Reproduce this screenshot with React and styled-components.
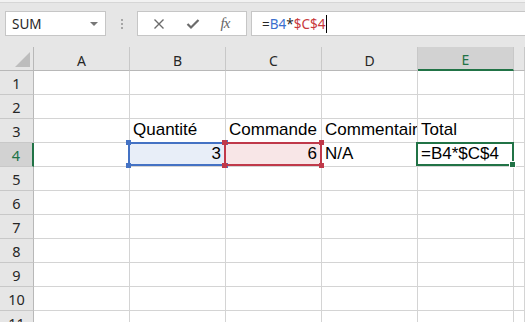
import styled, { createGlobalStyle, css } from "styled-components";

const GlobalStyle = createGlobalStyle`
  body {
    margin: 0;
    background: #ffffff;
    overflow: hidden;
  }
`;

const GREEN = "#217346";

const Sheet = styled.div`
  width: 525px;
  height: 322px;
  overflow: hidden;
  font-family: "Noto Sans", "Liberation Sans", sans-serif;
`;

const TopBar = styled.div`
  height: 47px;
  box-sizing: border-box;
  background: #e6e6e6;
  border-top: 2px solid #f2f2f2;
  box-shadow: inset 0 1px 0 #d6d6d6;
  display: flex;
  align-items: flex-start;
  padding: 9px 0 0 5px;
`;

const NameBox = styled.div`
  width: 101px;
  height: 25px;
  box-sizing: border-box;
  background: #fff;
  border: 1px solid #c6c6c6;
  display: flex;
  align-items: center;
  justify-content: space-between;
  padding: 0 6px 0 6px;
  font-size: 13.5px;
  color: #262626;
`;

const Caret = styled.span`
  width: 0;
  height: 0;
  border-left: 4px solid transparent;
  border-right: 4px solid transparent;
  border-top: 4px solid #777;
  margin-right: 1px;
`;

const Grip = styled.div`
  width: 31px;
  height: 25px;
  display: flex;
  flex-direction: column;
  align-items: center;
  justify-content: center;
  gap: 2px;

  span {
    width: 2px;
    height: 2px;
    background: #a6a6a6;
  }
`;

const FxButtons = styled.div`
  width: 110px;
  height: 25px;
  box-sizing: border-box;
  background: #fff;
  border: 1px solid #c6c6c6;
  display: flex;
  align-items: center;
  justify-content: space-around;
  padding: 0 6px 0 4px;
  color: #6b6b6b;
`;

const FxLabel = styled.span`
  font-family: "Liberation Serif", serif;
  font-style: italic;
  font-size: 15px;
  color: #666;
  letter-spacing: -1px;
`;

const FormulaInput = styled.div`
  flex: 1;
  height: 25px;
  margin-left: 4px;
  box-sizing: border-box;
  background: #fff;
  border: 1px solid #c6c6c6;
  border-right: none;
  display: flex;
  align-items: center;
  padding-left: 10px;
  font-size: 13.5px;
  color: #262626;
`;

const Ref = styled.span`
  color: ${(p) => p.$color};
`;

const TextCursor = styled.span`
  width: 1px;
  height: 18px;
  background: #000;
  margin-left: 1px;
`;

const Grid = styled.div`
  display: grid;
  grid-template-columns: 34px repeat(5, 96px) 1fr;
  grid-template-rows: 24px;
  grid-auto-rows: 24px;
`;

const Corner = styled.div`
  background: #e6e6e6;
  border-right: 1px solid #b8b8b8;
  border-bottom: 1px solid #b8b8b8;
  box-sizing: border-box;
  position: relative;

  &::after {
    content: "";
    position: absolute;
    right: 3px;
    bottom: 3px;
    width: 0;
    height: 0;
    border-left: 15px solid transparent;
    border-bottom: 15px solid #bdbdbd;
  }
`;

const ColHead = styled.div`
  box-sizing: border-box;
  background: ${(p) => (p.$active ? "#d2d2d2" : "#e6e6e6")};
  border-right: 1px solid #c8c8c8;
  border-bottom: ${(p) => (p.$active ? `2px solid ${GREEN}` : "1px solid #b8b8b8")};
  color: ${(p) => (p.$active ? GREEN : "#262626")};
  font-size: 14px;
  display: flex;
  align-items: center;
  justify-content: center;
  padding-top: 3px;
`;

const RowHead = styled.div`
  box-sizing: border-box;
  background: ${(p) => (p.$active ? "#d2d2d2" : "#e6e6e6")};
  border-right: ${(p) => (p.$active ? `2px solid ${GREEN}` : "1px solid #b8b8b8")};
  border-bottom: 1px solid #c8c8c8;
  color: ${(p) => (p.$active ? GREEN : "#262626")};
  font-size: 14.5px;
  display: flex;
  align-items: center;
  justify-content: center;
  padding-top: 1px;
`;

const Cell = styled.div`
  position: relative;
  box-sizing: border-box;
  border-right: 1px solid #d4d4d4;
  border-bottom: 1px solid #d4d4d4;
  background: ${(p) => p.$fill || "#fff"};
  font-family: "Liberation Sans", Arial, sans-serif;
  font-size: 17px;
  color: #000;
  white-space: nowrap;
  overflow: ${(p) => (p.$sel ? "visible" : "hidden")};
  display: flex;
  align-items: flex-end;
  justify-content: ${(p) => (p.$right ? "flex-end" : "flex-start")};
  padding: 0 4px 3px 3px;
`;

const Selection = styled.div`
  position: absolute;
  top: -1px;
  left: -2px;
  right: -1px;
  bottom: 0;
  border: 2px solid ${(p) => p.$color};
  pointer-events: none;
  z-index: ${(p) => p.$z || 1};
`;

const Handle = styled.span`
  position: absolute;
  width: 5px;
  height: 5px;
  background: ${(p) => p.$color};
  ${(p) => (p.$top ? css`top: -4px;` : css`bottom: -4px;`)}
  ${(p) => (p.$left ? css`left: -4px;` : css`right: -4px;`)}
`;

const FillHandle = styled.span`
  position: absolute;
  right: -4px;
  bottom: -4px;
  width: 5px;
  height: 5px;
  background: ${GREEN};
  border: 1px solid #fff;
`;

const CellText = styled.span`
  line-height: 19px;
`;

const columns = ["A", "B", "C", "D", "E"];

const data = {
  3: { B: "Quantité", C: "Commande", D: "Commentaire", E: "Total" },
  4: { B: "3", C: "6", D: "N/A", E: "=B4*$C$4" },
};

const RangeBox = ({ color, z }) => (
  <Selection $color={color} $z={z}>
    <Handle $color={color} $top $left />
    <Handle $color={color} $top />
    <Handle $color={color} $left />
    <Handle $color={color} />
  </Selection>
);

const renderCell = (row, col) => {
  const value = data[row] && data[row][col];
  const key = `${col}${row}`;
  if (key === "B4") {
    return (
      <Cell key={key} $fill="#e8eef8" $right $sel>
        <CellText>{value}</CellText>
        <RangeBox color="#4472c4" z={1} />
      </Cell>
    );
  }
  if (key === "C4") {
    return (
      <Cell key={key} $fill="#f8e6e7" $right $sel>
        <CellText>{value}</CellText>
        <RangeBox color="#c0394a" z={2} />
      </Cell>
    );
  }
  if (key === "E4") {
    return (
      <Cell key={key} $sel>
        <CellText>{value}</CellText>
        <Selection $color={GREEN} $z={3}>
          <FillHandle />
        </Selection>
      </Cell>
    );
  }
  return (
    <Cell key={key}>
      {value && <CellText>{value}</CellText>}
    </Cell>
  );
};

const rows = Array.from({ length: 11 }, (_, i) => i + 1);

export default function App() {
  return (
    <Sheet>
      <GlobalStyle />
      <TopBar>
        <NameBox>
          SUM
          <Caret />
        </NameBox>
        <Grip>
          <span />
          <span />
          <span />
        </Grip>
        <FxButtons>
          <svg width="12" height="12" viewBox="0 0 12 12">
            <path d="M1.5 1.5 L10.5 10.5 M10.5 1.5 L1.5 10.5" stroke="#6b6b6b" strokeWidth="1.4" fill="none" />
          </svg>
          <svg width="14" height="12" viewBox="0 0 14 12">
            <path d="M1.5 6 L5 9.5 L12.5 2" stroke="#6b6b6b" strokeWidth="2.2" fill="none" />
          </svg>
          <FxLabel>fx</FxLabel>
        </FxButtons>
        <FormulaInput>
          =<Ref $color="#3c6fce">B4</Ref>*<Ref $color="#c8383c">$C$4</Ref>
          <TextCursor />
        </FormulaInput>
      </TopBar>
      <Grid>
        <Corner />
        {columns.map((c) => (
          <ColHead key={c} $active={c === "E"}>
            {c}
          </ColHead>
        ))}
        <ColHead />
        {rows.map((r) => [
          <RowHead key={`h${r}`} $active={r === 4}>
            {r}
          </RowHead>,
          ...columns.map((c) => renderCell(r, c)),
          <Cell key={`F${r}`} />,
        ])}
      </Grid>
    </Sheet>
  );
}
